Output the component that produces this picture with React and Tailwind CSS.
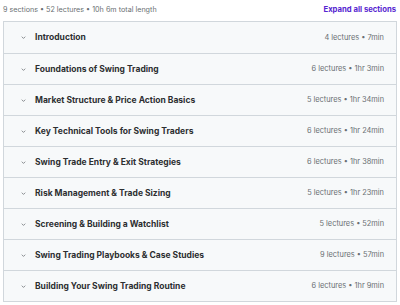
import React from "react";

const sections = [
  ["Introduction", "4 lectures • 7min"],
  ["Foundations of Swing Trading", "6 lectures • 1hr 3min"],
  ["Market Structure & Price Action Basics", "5 lectures • 1hr 34min"],
  ["Key Technical Tools for Swing Traders", "6 lectures • 1hr 24min"],
  ["Swing Trade Entry & Exit Strategies", "6 lectures • 1hr 38min"],
  ["Risk Management & Trade Sizing", "5 lectures • 1hr 23min"],
  ["Screening & Building a Watchlist", "5 lectures • 52min"],
  ["Swing Trading Playbooks & Case Studies", "9 lectures • 57min"],
  ["Building Your Swing Trading Routine", "6 lectures • 1hr 9min"],
];

function Chevron() {
  return (
    <svg width="7" height="7" viewBox="0 0 10 10" className="text-[#6a6f73]">
      <path d="M2.5 3.8 L5 6.3 L7.5 3.8" fill="none" stroke="currentColor" strokeWidth="1.1" />
    </svg>
  );
}

export default function App() {
  return (
    <div className="w-[400px] h-[305px] bg-white px-[3px] font-['Inter',sans-serif] overflow-hidden">
      <div className="flex items-center justify-between h-[21px] pb-[1px]">
        <span className="text-[7.2px] text-[#6a6f73]">
          9 sections • 52 lectures • 10h 6m total length
        </span>
        <span className="text-[7.7px] font-bold text-[#5624d0] pr-[1px]">Expand all sections</span>
      </div>
      <div className="border border-[#d1d7dc] w-[394px]">
        {sections.map(([title, meta], i) => (
          <div
            key={title}
            className={
              "flex items-center h-[31px] bg-[#f7f9fa] pl-[16px] pr-[12px] " +
              (i > 0 ? "border-t border-[#d1d7dc]" : "")
            }
          >
            <Chevron />
            <span className="ml-[8px] text-[8.5px] font-bold text-[#2d2f31] flex-1">{title}</span>
            <span className="text-[7.4px] text-[#6a6f73]">{meta}</span>
          </div>
        ))}
      </div>
    </div>
  );
}
